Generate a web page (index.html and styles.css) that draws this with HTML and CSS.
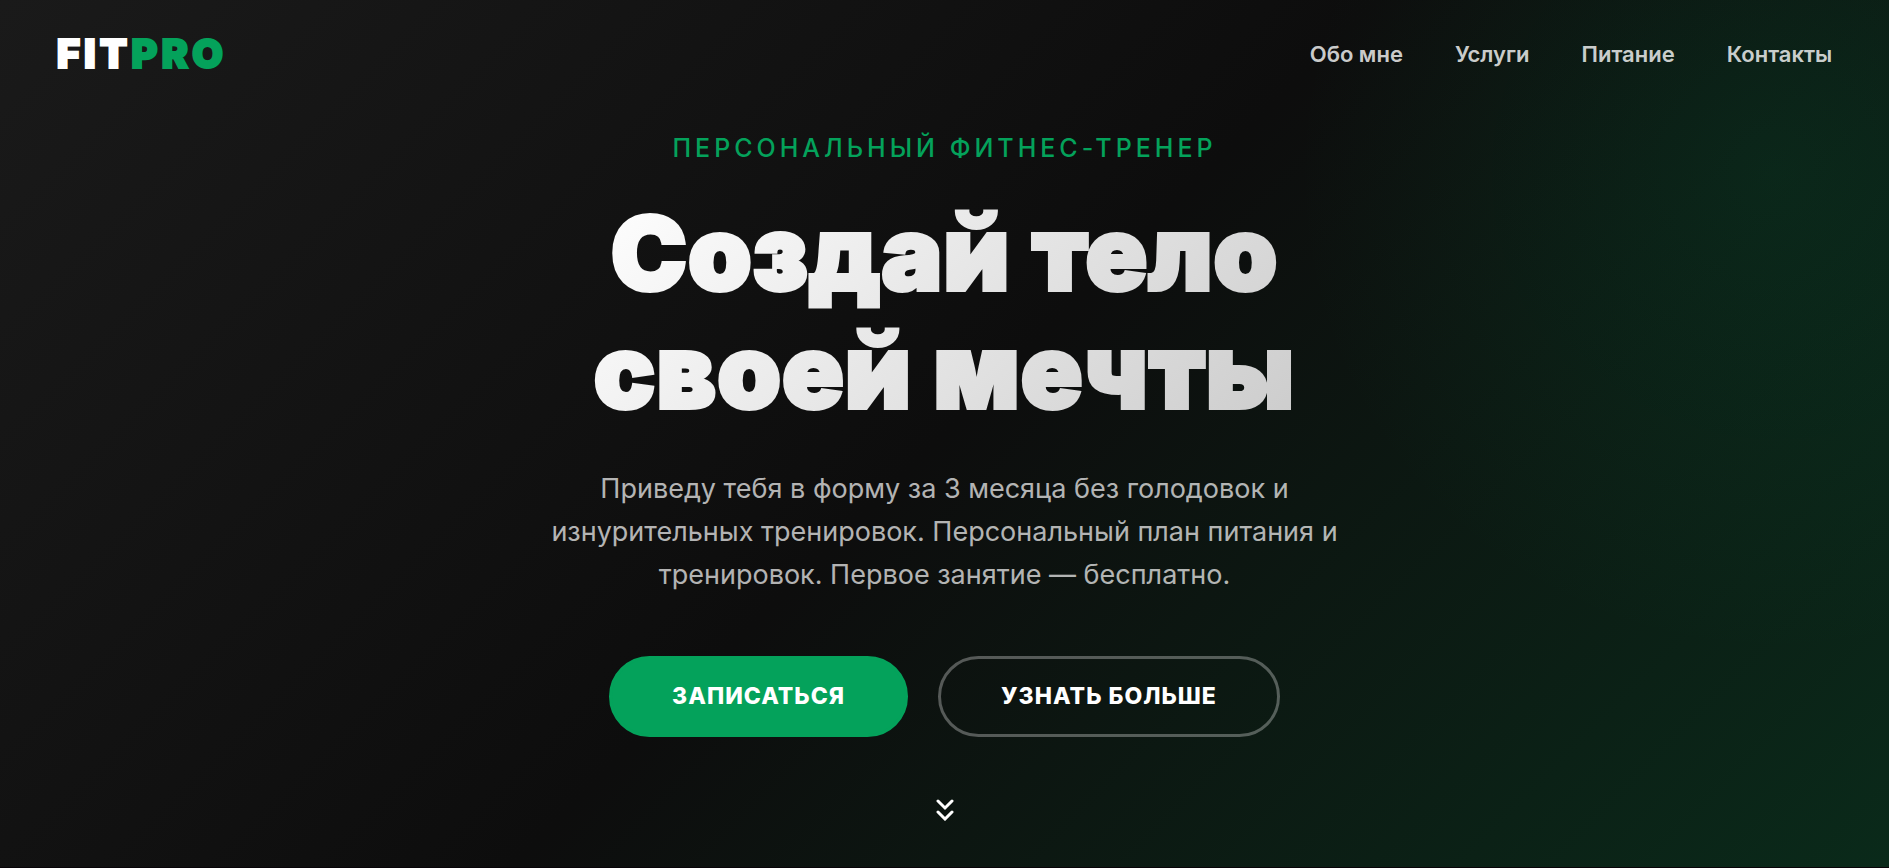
FILE: index.html
```html
<!DOCTYPE html>
<html lang="ru">

<head>
    <meta charset="UTF-8">
    <meta name="viewport" content="width=device-width, initial-scale=1.0">
    <title>FITPRO - Персональный фитнес-тренер</title>
    <link rel="stylesheet" href="styles.css">
</head>

<body>
    <div class="page">
        <header class="header">
            <a href="#" class="logo">FIT<span>PRO</span></a>
            <nav class="nav">
                <a href="#about">Обо мне</a>
                <a href="#services">Услуги</a>
                <a href="#nutrition">Питание</a>
                <a href="#contacts">Контакты</a>
            </nav>
        </header>

        <main class="hero">
            <p class="hero-label">Персональный фитнес-тренер</p>
            <h1>Создай тело<br>своей мечты</h1>
            <p class="hero-text">Приведу тебя в форму за 3 месяца без голодовок и изнурительных тренировок. Персональный план питания и тренировок. Первое занятие — бесплатно.</p>
            <div class="hero-buttons">
                <a href="#contacts" class="btn btn-primary">Записаться</a>
                <a href="#about" class="btn btn-outline">Узнать больше</a>
            </div>
            <a href="#about" class="scroll-down" aria-label="Вниз">
                <svg width="18" height="24" viewBox="0 0 18 24" fill="none" stroke="currentColor" stroke-width="3" stroke-linecap="round">
                    <path d="M2 4l7 7 7-7M2 15l7 7 7-7" />
                </svg>
            </a>
        </main>
    </div>
</body>

</html>
```
FILE: styles.css
```css
* {
    margin: 0;
    padding: 0;
    box-sizing: border-box;
}

body {
    font-family: Inter, "Liberation Sans", sans-serif;
    background: #080408;
    color: white;
}

a {
    color: inherit;
    text-decoration: none;
}

.page {
    min-height: calc(100vh - 1px);
    background:
        radial-gradient(circle at 94% 20%, rgba(0, 163, 92, 0.1), transparent 480px),
        linear-gradient(135deg, #1a1a1a 0%, #0d0d0d 50%, #0a2a1a 100%);
}

.header {
    display: flex;
    justify-content: space-between;
    align-items: center;
    padding: 28px 3%;
}

.logo {
    font-size: 40px;
    line-height: 52px;
    font-weight: 900;
    letter-spacing: 4px;
    -webkit-text-stroke: 2px;
}

.logo span {
    color: #04a25b;
}

.nav {
    display: flex;
    gap: 52px;
    font-size: 22px;
    font-weight: 600;
    color: rgba(255, 255, 255, 0.8);
}

.nav a:hover {
    color: #04a25b;
}

.hero {
    display: flex;
    flex-direction: column;
    align-items: center;
    padding: 24px 24px 40px;
    text-align: center;
}

.hero-label {
    font-size: 25px;
    line-height: 32px;
    font-weight: 500;
    letter-spacing: 4px;
    text-transform: uppercase;
    color: #04a25b;
}

h1 {
    margin-top: 30px;
    font-size: 102px;
    line-height: 118px;
    font-weight: 900;
    letter-spacing: 1px;
    background: linear-gradient(135deg, #fff 0%, #ccc 100%);
    -webkit-background-clip: text;
    background-clip: text;
    -webkit-text-stroke: 4px transparent;
    color: transparent;
}

.hero-text {
    max-width: 840px;
    margin-top: 37px;
    font-size: 27px;
    line-height: 43px;
    color: rgba(255, 255, 255, 0.7);
}

.hero-buttons {
    display: flex;
    gap: 30px;
    margin-top: 60px;
}

.btn {
    padding: 24px 60px;
    border: 3px solid transparent;
    border-radius: 75px;
    font-size: 23px;
    line-height: 27px;
    font-weight: 800;
    letter-spacing: 1px;
    text-transform: uppercase;
}

.btn-primary {
    border-color: #04a25b;
    background: #04a25b;
}

.btn-outline {
    border-color: rgba(255, 255, 255, 0.3);
}

.scroll-down {
    margin-top: 60px;
    line-height: 0;
}
```
